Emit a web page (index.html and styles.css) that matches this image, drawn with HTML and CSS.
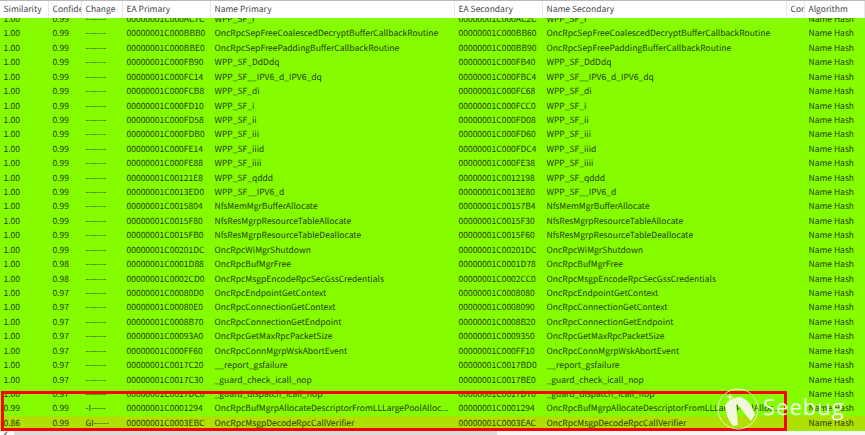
FILE: index.html
```html
<!DOCTYPE html>
<html>
<head>
<meta charset="utf-8">
<title>Matched functions</title>
<link rel="stylesheet" href="styles.css">
</head>
<body>
<div class="page">
<div class="topline"></div>
<div class="head row">
<div class="hc">Similarity</div><div class="hc">Confidence</div><div class="hc">Change</div><div class="hc">EA Primary</div><div class="hc">Name Primary</div><div class="hc">EA Secondary</div><div class="hc">Name Secondary</div><div class="hc">Comments</div><div class="hc">Algorithm</div>
</div>
<div class="body"><div class="rows" id="rows"></div></div>
<div class="scroll"><span class="arrow"><i class="chev"></i></span><span class="thumb"></span></div>
<div class="redbox"></div>
<div class="mark">
<svg class="bug" width="42" height="42" viewBox="0 0 42 42"><circle cx="21" cy="21" r="20" fill="none" stroke="#eef7dc" stroke-width="1"/><path d="M8 17 Q14 9 24 9 Q34 13 38 27 L34 33 L19 15 L21 37 L16 38 Q9 30 8 17Z" fill="#f2f8de"/><path d="M13 5 L14 8 L17 9 L14 10 L13 13 L12 10 L9 9 L12 8Z" fill="#f2f8de"/></svg>
<span class="seebug">Seebug</span>
</div>
</div>
<script src="app.js"></script>
</body>
</html>
```
FILE: styles.css
```css
html,body{margin:0;padding:0;width:865px;height:435px;overflow:hidden;background:#fff}
.page{position:relative;width:865px;height:435px;overflow:hidden;font:8.5px "Noto Sans CJK SC","Noto Sans",sans-serif;color:#223c00;text-rendering:geometricPrecision}
.topline{height:1px;background:#b9b9b9}
.row{display:grid;grid-template-columns:49px 33px 41px 88px 244px 88px 244px 18px 60px;white-space:nowrap}
.head{height:17px;background:#fff;color:#444;line-height:17px}
.hc{padding-left:3.5px;overflow:hidden;border-right:1px solid #e8e8e8;box-sizing:border-box}
.body{height:413px;background:#86fc00;overflow:hidden}
.rows{margin-top:-6px}
.cell{padding-left:3.5px;overflow:hidden;line-height:14.43px;height:14.43px}
.line{height:14.43px}
.w86{background:#b0e000}
.scroll{height:4px;background:#f6f6f6;display:flex}
.arrow{width:14px;background:#fafafa;display:flex;justify-content:center}
.chev{width:3px;height:3px;margin-top:1px;border-left:1px solid #666;border-top:1px solid #666;transform:rotate(-45deg)}
.thumb{width:483px;background:#dcdcdc}
.redbox{position:absolute;left:1px;top:391px;width:780px;height:34px;border:3px solid #f00}
.mark{position:absolute;left:717px;top:388px;display:flex;align-items:center}
.seebug{font:400 22px "Open Sans",sans-serif;color:#f4fae8;letter-spacing:1px;margin-left:4px;margin-top:-4px}
```
FILE: app.js
```js
const d=[
["1.00","0.99","-------","00000001C000AC7C","WPP_SF_i","00000001C000AC2C","WPP_SF_i"],
["1.00","0.99","-------","00000001C000BBB0","OncRpcSepFreeCoalescedDecryptBufferCallbackRoutine","00000001C000BB60","OncRpcSepFreeCoalescedDecryptBufferCallbackRoutine"],
["1.00","0.99","-------","00000001C000BBE0","OncRpcSepFreePaddingBufferCallbackRoutine","00000001C000BB90","OncRpcSepFreePaddingBufferCallbackRoutine"],
["1.00","0.99","-------","00000001C000FB90","WPP_SF_DdDdq","00000001C000FB40","WPP_SF_DdDdq"],
["1.00","0.99","-------","00000001C000FC14","WPP_SF__IPV6_d_IPV6_dq","00000001C000FBC4","WPP_SF__IPV6_d_IPV6_dq"],
["1.00","0.99","-------","00000001C000FCB8","WPP_SF_di","00000001C000FC68","WPP_SF_di"],
["1.00","0.99","-------","00000001C000FD10","WPP_SF_i","00000001C000FCC0","WPP_SF_i"],
["1.00","0.99","-------","00000001C000FD58","WPP_SF_ii","00000001C000FD08","WPP_SF_ii"],
["1.00","0.99","-------","00000001C000FDB0","WPP_SF_iii","00000001C000FD60","WPP_SF_iii"],
["1.00","0.99","-------","00000001C000FE14","WPP_SF_iiid","00000001C000FDC4","WPP_SF_iiid"],
["1.00","0.99","-------","00000001C000FE88","WPP_SF_iiii","00000001C000FE38","WPP_SF_iiii"],
["1.00","0.99","-------","00000001C00121E8","WPP_SF_qddd","00000001C0012198","WPP_SF_qddd"],
["1.00","0.99","-------","00000001C0013ED0","WPP_SF__IPV6_d","00000001C0013E80","WPP_SF__IPV6_d"],
["1.00","0.99","-------","00000001C0015804","NfsMemMgrBufferAllocate","00000001C00157B4","NfsMemMgrBufferAllocate"],
["1.00","0.99","-------","00000001C0015F80","NfsResMgrpResourceTableAllocate","00000001C0015F30","NfsResMgrpResourceTableAllocate"],
["1.00","0.99","-------","00000001C0015FB0","NfsResMgrpResourceTableDeallocate","00000001C0015F60","NfsResMgrpResourceTableDeallocate"],
["1.00","0.99","-------","00000001C00201DC","OncRpcWiMgrShutdown","00000001C00201DC","OncRpcWiMgrShutdown"],
["1.00","0.98","-------","00000001C0001D88","OncRpcBufMgrFree","00000001C0001D78","OncRpcBufMgrFree"],
["1.00","0.98","-------","00000001C0002CD0","OncRpcMsgpEncodeRpcSecGssCredentials","00000001C0002CC0","OncRpcMsgpEncodeRpcSecGssCredentials"],
["1.00","0.97","-------","00000001C00080D0","OncRpcEndpointGetContext","00000001C0008080","OncRpcEndpointGetContext"],
["1.00","0.97","-------","00000001C00080E0","OncRpcConnectionGetContext","00000001C0008090","OncRpcConnectionGetContext"],
["1.00","0.97","-------","00000001C0008B70","OncRpcConnectionGetEndpoint","00000001C0008B20","OncRpcConnectionGetEndpoint"],
["1.00","0.97","-------","00000001C00093A0","OncRpcGetMaxRpcPacketSize","00000001C0009350","OncRpcGetMaxRpcPacketSize"],
["1.00","0.97","-------","00000001C000FF60","OncRpcConnMgrpWskAbortEvent","00000001C000FF10","OncRpcConnMgrpWskAbortEvent"],
["1.00","0.97","-------","00000001C0017C20","__report_gsfailure","00000001C0017BD0","__report_gsfailure"],
["1.00","0.97","-------","00000001C0017C30","_guard_check_icall_nop","00000001C0017BE0","_guard_check_icall_nop"],
["1.00","0.97","-------","00000001C0017DC0","_guard_dispatch_icall_nop","00000001C0017D70","_guard_dispatch_icall_nop"],
["0.99","0.99","-I-----","00000001C0001294","OncRpcBufMgrpAllocateDescriptorFromLLLargePoolAlloc...","00000001C0001294","OncRpcBufMgrpAllocateDescriptorFromLLLargePoolAlloc..."],
["0.86","0.99","GI-----","00000001C0003EBC","OncRpcMsgpDecodeRpcCallVerifier","00000001C0003EAC","OncRpcMsgpDecodeRpcCallVerifier"]
];
const rows=document.getElementById("rows");
for(const r of d){
  const el=document.createElement("div");
  el.className="row line"+(r[0]==="0.86"?" w86":"");
  [...r.slice(0,7),"","Name Hash"].forEach(t=>{const c=document.createElement("div");c.className="cell";c.textContent=t;el.appendChild(c);});
  rows.appendChild(el);
}
```
